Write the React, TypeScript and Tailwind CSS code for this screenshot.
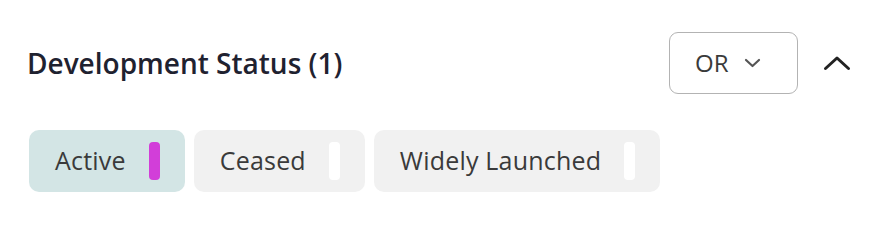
import React, { useState } from "react";

type Status = { label: string; active: boolean };

const STATUSES: Status[] = [
  { label: "Active", active: true },
  { label: "Ceased", active: false },
  { label: "Widely Launched", active: false },
];

const Chip: React.FC<{ status: Status }> = ({ status }) => (
  <button
    className={`flex h-[62px] items-center gap-[23px] rounded-[10px] pl-[26px] pr-[25px] text-[25px] tracking-[0.2px] text-[#3a3a3a] ${
      status.active ? "bg-[#d3e5e5]" : "bg-[#f1f1f1]"
    }`}
  >
    <span>{status.label}</span>
    <span
      className={`h-[38px] w-[11px] rounded-[4px] ${
        status.active ? "bg-[#d23ed9]" : "bg-white"
      }`}
    />
  </button>
);

export default function App() {
  const [open, setOpen] = useState(true);

  return (
    <div className="h-[225px] w-[889px] bg-white font-['Source_Sans_Pro','Open_Sans',sans-serif]">
      <div className="flex items-center pl-[27px] pr-[38px] pt-[32px]">
        <h2 className="flex-1 text-[28px] font-semibold text-[#1f2230]">
          Development Status (1)
        </h2>
        <button className="flex h-[62px] w-[129px] items-center gap-[16px] rounded-[9px] border-[1.5px] border-[#b3b3b3] pl-[25px] text-[24px] font-medium text-[#3a3a3a]">
          OR
          <svg width="17" height="10" viewBox="0 0 17 10" fill="none">
            <path d="M2 2l6.5 6 6.5-6" stroke="#555" strokeWidth="2.2" strokeLinecap="round" strokeLinejoin="round" />
          </svg>
        </button>
        <button onClick={() => setOpen(!open)} className="ml-[25px] flex items-center justify-center">
          <svg width="28" height="16" viewBox="0 0 28 16" fill="none">
            <path d="M2.5 13.5L14 3l11.5 10.5" stroke="#222" strokeWidth="3" strokeLinecap="round" strokeLinejoin="round" />
          </svg>
        </button>
      </div>
      {open && (
        <div className="mt-[36px] flex gap-[9px] pl-[29px]">
          {STATUSES.map((s) => (
            <Chip key={s.label} status={s} />
          ))}
        </div>
      )}
    </div>
  );
}
